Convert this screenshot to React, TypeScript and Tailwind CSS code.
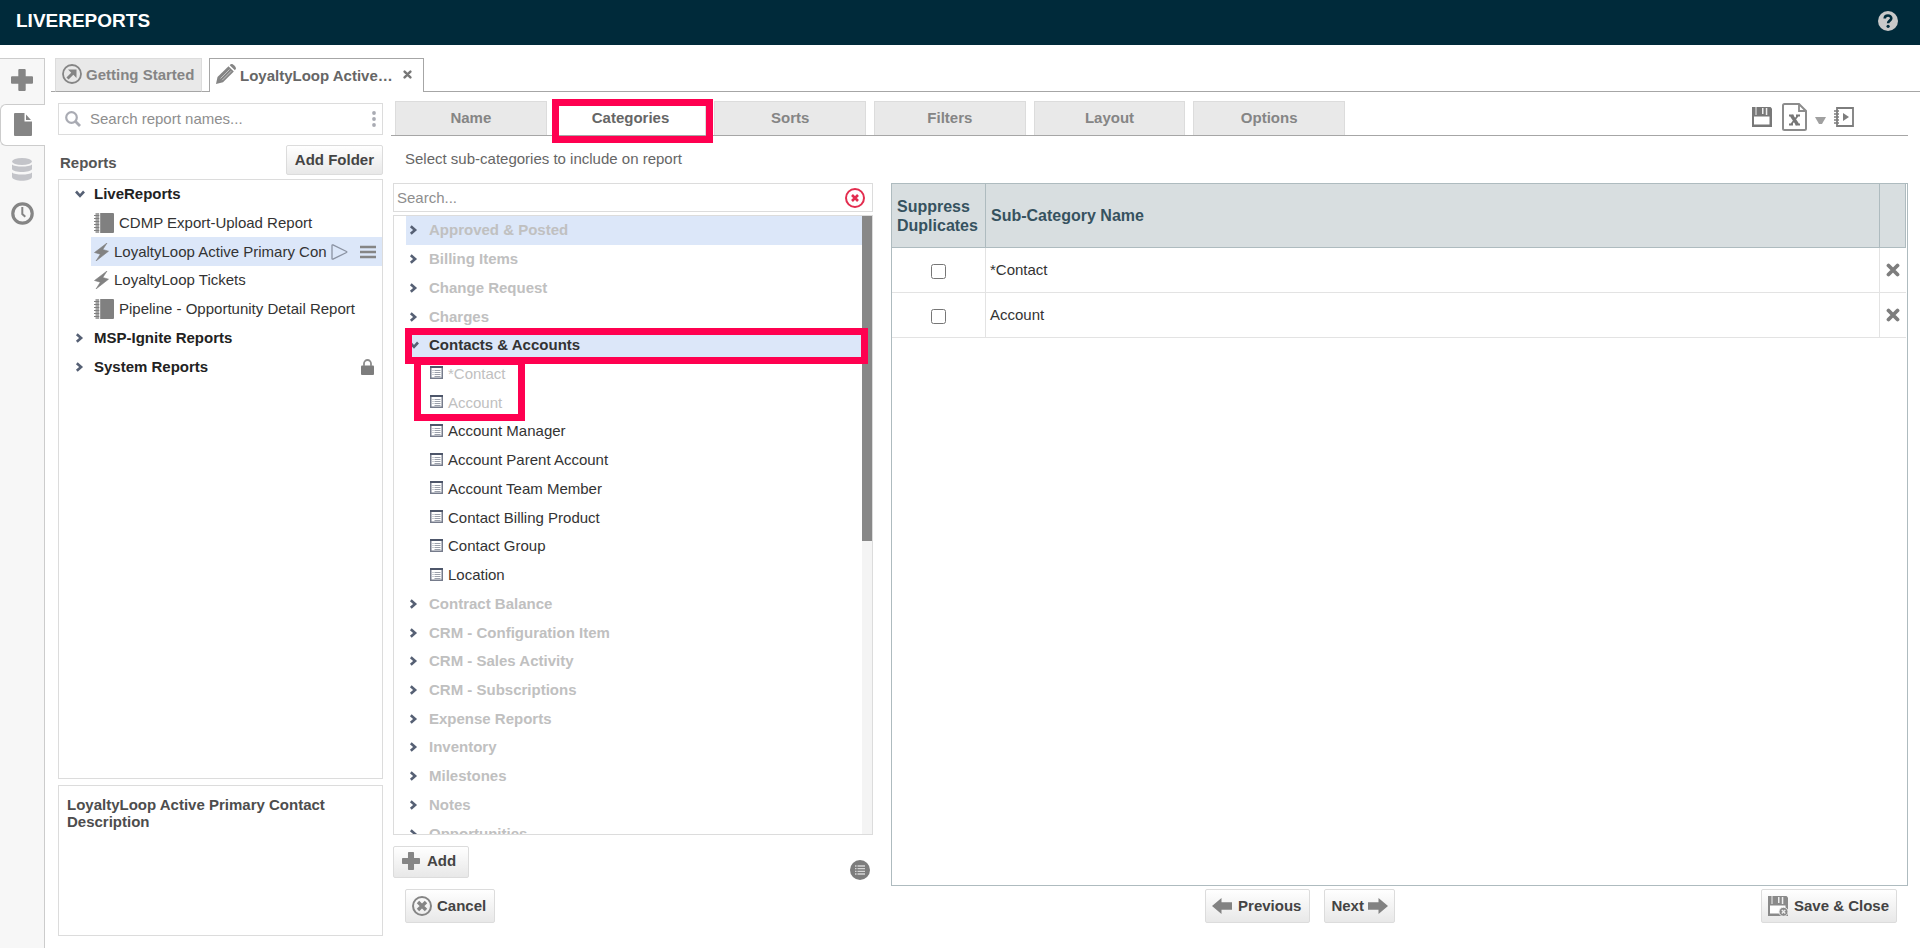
import React, { useState } from 'react';
import clsx from 'clsx';

interface Report {
  name: string;
  kind: 'folder' | 'book' | 'bolt';
  open?: boolean;
  selected?: boolean;
  locked?: boolean;
}

interface Category {
  name: string;
  leaf?: boolean;
  open?: boolean;
  hover?: boolean;
  used?: boolean;
}

const reports: Report[] = [
  { name: 'LiveReports', kind: 'folder', open: true },
  { name: 'CDMP Export-Upload Report', kind: 'book' },
  { name: 'LoyaltyLoop Active Primary Con', kind: 'bolt', selected: true },
  { name: 'LoyaltyLoop Tickets', kind: 'bolt' },
  { name: 'Pipeline - Opportunity Detail Report', kind: 'book' },
  { name: 'MSP-Ignite Reports', kind: 'folder' },
  { name: 'System Reports', kind: 'folder', locked: true },
];

const categories: Category[] = [
  { name: 'Approved & Posted', hover: true },
  { name: 'Billing Items' },
  { name: 'Change Request' },
  { name: 'Charges' },
  { name: 'Contacts & Accounts', open: true },
  { name: '*Contact', leaf: true, used: true },
  { name: 'Account', leaf: true, used: true },
  { name: 'Account Manager', leaf: true },
  { name: 'Account Parent Account', leaf: true },
  { name: 'Account Team Member', leaf: true },
  { name: 'Contact Billing Product', leaf: true },
  { name: 'Contact Group', leaf: true },
  { name: 'Location', leaf: true },
  { name: 'Contract Balance' },
  { name: 'CRM - Configuration Item' },
  { name: 'CRM - Sales Activity' },
  { name: 'CRM - Subscriptions' },
  { name: 'Expense Reports' },
  { name: 'Inventory' },
  { name: 'Milestones' },
  { name: 'Notes' },
  { name: 'Opportunities' },
];

const steps = ['Name', 'Categories', 'Sorts', 'Filters', 'Layout', 'Options'];

const buttonClass =
  'flex items-center rounded-[2px] border border-[#dcdcdc] bg-linear-to-b from-white to-[#e8e8e8] font-bold text-[#444]';

const PlusIcon = ({ className }: { className?: string }) => (
  <svg className={className} viewBox="0 0 22 22" fill="#858585">
    <path d="M8.300 0h5.400a1 1 0 0 1 1 1v6.300H21a1 1 0 0 1 1 1v5.400a1 1 0 0 1-1 1h-6.300V21a1 1 0 0 1-1 1H8.300a1 1 0 0 1-1-1v-6.300H1a1 1 0 0 1-1-1V8.300a1 1 0 0 1 1-1h6.300V1a1 1 0 0 1 1-1z" />
  </svg>
);

const Chevron = ({ open }: { open?: boolean }) => (
  <svg className="h-[10px] w-[10px] shrink-0" viewBox="0 0 10 10" fill="none" stroke="#566074" strokeWidth="2.600">
    {open ? <path d="M1 2.500l4 4.300 4-4.300" /> : <path d="M1.800 1.200l4.300 3.800-4.300 3.800" />}
  </svg>
);

const BookIcon = () => (
  <svg className="h-5 w-5 shrink-0" viewBox="0 0 20 20">
    <path d="M6 0h13a1 1 0 0 1 1 1v18a1 1 0 0 1-1 1H6z" fill="#808080" />
    <path d="M1.500 0H5v20H1.500z" fill="#a3a3a3" />
    <path d="M0 2.500h5.500M0 5.500h5.500M0 8.500h5.500M0 11.500h5.500M0 14.500h5.500M0 17.500h5.500" stroke="#808080" strokeWidth="1.200" />
    <path d="M5.800 0v20" stroke="#e2e2e2" strokeWidth="0.800" />
  </svg>
);

const BoltIcon = () => (
  <svg className="h-[18px] w-[15px] shrink-0" viewBox="0 0 15 18" fill="#828282">
    <path d="M13 0L0.500 9.500l5.800 1.700L2 18 14.500 8.200 8.800 6.500z" stroke="#828282" strokeWidth="0.600" />
  </svg>
);

const CrossIcon = ({ className }: { className?: string }) => (
  <svg className={className} viewBox="0 0 14 14" fill="none" stroke="currentColor" strokeWidth="3.800" strokeLinecap="round">
    <path d="M2.500 2.500l9 9M11.500 2.500l-9 9" />
  </svg>
);

const CircleCross = ({ color, heavy }: { color: string; heavy?: boolean }) => (
  <svg className="h-5 w-5" viewBox="0 0 20 20" fill="none" stroke={color}>
    <circle cx="10" cy="10" r="9" strokeWidth="2" />
    {heavy ? <path d="M6 6l8 8M14 6l-8 8" strokeWidth="3.400" /> : <path d="M7 7l6 6M13 7l-6 6" strokeWidth="2.600" />}
  </svg>
);

const FieldIcon = () => (
  <svg className="mb-0.5 h-[13px] w-[13px] shrink-0" viewBox="0 0 13 13">
    <rect x="0.750" y="0.750" width="11.500" height="11.500" fill="#fff" stroke="#757b8b" strokeWidth="1.500" />
    <path d="M0 1h13" stroke="#4d566a" strokeWidth="2" />
    <path d="M2.500 4.500h1M4.500 4.500h6M2.500 6.500h1M4.500 6.500h6M2.500 8.500h1M4.500 8.500h6M4.500 10.500h6" stroke="#9ba0ab" />
  </svg>
);

const ArrowIcon = ({ right }: { right?: boolean }) => (
  <svg className={clsx('h-4 w-5', right && 'rotate-180')} viewBox="0 0 20 16" fill="#828282">
    <path d="M0 8l9.500-8v4.200H20v7.600H9.500V16z" />
  </svg>
);

const FloppyIcon = ({ closing }: { closing?: boolean }) => (
  <svg className="h-5 w-5" viewBox="0 0 20 20">
    <path d="M0 0h18.500L20 1.500V20H0z" fill={closing ? '#8a8a8a' : '#787878'} />
    <path d="M2 9.500h15.500v8H2z" fill="#fff" />
    <path d="M3.500 0h1v8h-1zM10 1h1.500v6H10zM13.800 1h1.500v7h-1.500z" fill="#eee" />
    {closing && (
      <g>
        <circle cx="15.500" cy="15.800" r="4.500" fill="#8a8a8a" stroke="#f0f0f0" />
        <path d="M13.800 14l3.500 3.500M17.300 14l-3.500 3.500" stroke="#eee" strokeWidth="1.300" />
      </g>
    )}
  </svg>
);

const Sidebar = () => (
  <nav className="flex w-[45px] shrink-0 flex-col border-t border-[#ccc] bg-[#f7f7f7]">
    <button aria-label="New" className="flex h-[45px] items-center justify-center border-r border-[#ccc] pb-1">
      <PlusIcon className="h-[22px] w-[22px]" />
    </button>
    <button
      aria-label="Reports"
      className="flex h-[42px] items-center justify-center rounded-l-md border-y border-l border-[#ccc] bg-white pr-px pb-0.5"
    >
      <svg className="h-[23px] w-[18px]" viewBox="0 0 18 23" fill="#858585">
        <path d="M1 0h9.500v8.500H18V22a1 1 0 0 1-1 1H1a1 1 0 0 1-1-1V1a1 1 0 0 1 1-1z" />
        <path d="M12 1.500L17 7h-5z" />
      </svg>
    </button>
    <div className="flex flex-1 flex-col border-r border-[#ccc]">
      <button aria-label="Data sources" className="flex h-[46px] items-center justify-center">
        <svg className="h-[23px] w-5" viewBox="0 0 20 23" fill="#c3c4c9">
          <ellipse cx="10" cy="3.500" rx="10" ry="3.500" />
          <path d="M0 6.500c3 2.800 17 2.800 20 0v4.500c-1 4-19 4-20 0z" />
          <path d="M0 14.500c3 2.800 17 2.800 20 0V19c-1 5-19 5-20 0z" />
        </svg>
      </button>
      <button aria-label="Schedule" className="flex h-[42px] items-center justify-center">
        <svg className="h-[23px] w-[23px]" viewBox="0 0 23 23" fill="none" stroke="#858585">
          <circle cx="11.500" cy="11.500" r="9.700" strokeWidth="3.200" />
          <path d="M11.300 5v7l3 2.700" strokeWidth="2" />
        </svg>
      </button>
    </div>
  </nav>
);

const DocumentTabs = () => (
  <div className="flex h-[34px]">
    <div className="w-1 border-b border-[#a6a6a6]" />
    <button className="flex w-[147px] items-center border border-b-[#a6a6a6] border-[#dcdcdc] bg-[#e9e9e9] pl-1.5 font-bold text-[#858585]">
      <svg className="mr-1 mb-0.5 h-5 w-5" viewBox="0 0 20 20" fill="none" stroke="#858585">
        <circle cx="10" cy="10" r="9" strokeWidth="1.800" />
        <path d="M5.500 14.500l6-6" strokeWidth="3" />
        <path d="M6 5.500h8.500V14l-2.700-2.700L8.500 8z" fill="#858585" stroke="none" />
      </svg>
      Getting Started
    </button>
    <div className="w-[7px] border-b border-[#a6a6a6]" />
    <div className="flex w-[215px] items-center border-x border-t border-[#a6a6a6] pl-1.5 font-bold text-[#666]">
      <svg className="mr-1 mb-1 h-5 w-5" viewBox="0 0 20 20" fill="#858585">
        <path d="M0 20l1.500-7L12.500 2.200l5.300 5.300L7 18.300z" />
        <path d="M13.700 1.200c1-1.200 2-1.400 3.300-.7.900.5 1.900 1.500 2.500 2.500.7 1.200.4 2.200-.6 3.300z" />
        <path d="M4.500 14.500l9-9M6.200 16.200l9-9" stroke="#c9c9c9" strokeWidth="0.900" />
      </svg>
      LoyaltyLoop Active…
      <button aria-label="Close tab" className="mb-0.5 ml-2.5 text-[#777]">
        <CrossIcon className="h-[9px] w-[9px]" />
      </button>
    </div>
    <div className="flex-1 border-b border-[#a6a6a6]" />
  </div>
);

const ReportRow = ({ report }: { report: Report }) => {
  if (report.kind === 'folder') {
    return (
      <li className="flex items-center pr-2 pl-4 font-bold text-[#222]">
        <Chevron open={report.open} />
        <span className="ml-[9px] flex-1">{report.name}</span>
        {report.locked && (
          <svg className="h-4 w-[13px]" viewBox="0 0 13 16">
            <rect y="6.500" width="13" height="9.500" rx="1" fill="#7d7d7d" />
            <path d="M3 7V4.500a3.500 3.500 0 0 1 7 0V7" fill="none" stroke="#8d8d8d" strokeWidth="1.800" />
          </svg>
        )}
      </li>
    );
  }
  return (
    <li className={clsx('ml-8 flex items-center pr-1.5 pl-[3px] text-[#333]', report.selected && 'bg-[#dce7f9]')}>
      {report.kind === 'book' ? <BookIcon /> : <BoltIcon />}
      <span className="ml-[5px] whitespace-nowrap">{report.name}</span>
      {report.selected && (
        <>
          <button aria-label="Run report" className="ml-1">
            <svg className="h-4 w-[17px]" viewBox="0 0 17 16" fill="none" stroke="#8b93a3" strokeWidth="1.300">
              <path d="M1 1.500v13c0 .6.500.8 1 .6L15.500 8.500c.5-.3.500-.7 0-1L2 .9C1.500.700 1 .900 1 1.500z" />
            </svg>
          </button>
          <button aria-label="Report menu" className="ml-auto">
            <svg className="h-[14px] w-4" viewBox="0 0 16 14" stroke="#858585" strokeWidth="2.600">
              <path d="M0 2h16M0 7h16M0 12h16" />
            </svg>
          </button>
        </>
      )}
    </li>
  );
};

const ReportsPanel = () => (
  <section className="flex w-[325px] shrink-0 flex-col pb-3">
    <div className="flex h-8 items-center border border-[#dcdcdc] px-1.5">
      <svg className="h-4 w-4 shrink-0" viewBox="0 0 16 16" fill="none" stroke="#a9abb3">
        <circle cx="6.500" cy="6.500" r="5.300" strokeWidth="2.200" />
        <path d="M10.300 10.300l4.700 4.700" strokeWidth="2.800" />
      </svg>
      <input
        aria-label="Search report names"
        placeholder="Search report names..."
        className="ml-[9px] min-w-0 flex-1 outline-none placeholder:text-[#8e8e8e]"
      />
      <button aria-label="Search options">
        <svg className="h-4 w-1" viewBox="0 0 4 16" fill="#a9abb3">
          <circle cx="2" cy="2" r="1.900" />
          <circle cx="2" cy="8" r="1.900" />
          <circle cx="2" cy="14" r="1.900" />
        </svg>
      </button>
    </div>
    <div className="mt-2.5 flex h-[34px] items-start justify-between">
      <h2 className="mt-2 ml-0.5 font-bold text-[#555]">Reports</h2>
      <button className={clsx(buttonClass, 'h-[30px] px-2')}>Add Folder</button>
    </div>
    <div className="min-h-0 flex-1 border border-[#dcdcdc]">
      <ul className="grid h-[201px] auto-rows-fr">
        {reports.map((report) => (
          <ReportRow key={report.name} report={report} />
        ))}
      </ul>
    </div>
    <div className="mt-1.5 h-[151px] border border-[#dcdcdc] px-2 py-2.5 leading-[17px] font-bold text-[#4d4d4d]">
      <p>LoyaltyLoop Active Primary Contact</p>
      <p>Description</p>
    </div>
  </section>
);

const StepTabs = () => (
  <div className="flex h-[35px] items-stretch border-b border-[#a6a6a6] pl-1">
    <div className="flex w-[950px] gap-2">
      {steps.map((step) => {
        const active = step === 'Categories';
        return (
          <button
            key={step}
            className={clsx(
              'relative flex-1 border-x border-t border-[#dcdcdc] pb-0.5 font-bold',
              active ? 'bg-white text-[#666]' : 'bg-[#e9e9e9] text-[#858585]'
            )}
          >
            {step}
            {active && (
              <span className="absolute -top-[3px] -right-2 -bottom-2 -left-1 z-10 border-[7px] border-[#ff0050]" />
            )}
          </button>
        );
      })}
    </div>
    <div className="ml-auto flex items-center pr-[54px] pb-0.5">
      <button aria-label="Save">
        <FloppyIcon />
      </button>
      <button aria-label="Export to Excel" className="ml-2.5">
        <svg className="h-7 w-[25px]" viewBox="0 0 25 28" fill="none" stroke="#8c8c8c">
          <path d="M2.500 1H17l7 7v17.500a1.500 1.500 0 0 1-1.500 1.500h-20A1.500 1.500 0 0 1 1 25.500v-23A1.500 1.500 0 0 1 2.500 1z" strokeWidth="2" />
          <path d="M17 1v7h7" strokeWidth="1.800" />
          <path d="M9.500 12.500l6 9" strokeWidth="3.400" stroke="#777" />
          <path d="M16 12.500l-7 9M7 12.500h4.500M14 12.500h4M7 21.500h4M13.500 21.500H18" strokeWidth="1.800" stroke="#777" />
        </svg>
      </button>
      <button aria-label="Export options" className="mt-1.5 ml-2">
        <svg className="h-[7px] w-[11px]" viewBox="0 0 11 7" fill="#a0a0a0">
          <path d="M0 0h11L7 7H4z" />
        </svg>
      </button>
      <button aria-label="Run report" className="ml-2">
        <svg className="h-5 w-5" viewBox="0 0 20 20" fill="none" stroke="#7d7d7d">
          <path d="M3 1h16v18H3z" strokeWidth="1.800" />
          <path d="M0 4h5M0 7h5M0 10h5M0 13h5M0 16h5" strokeWidth="1.300" />
          <path d="M9 6l6 4-6 4z" fill="#7d7d7d" stroke="none" />
        </svg>
      </button>
    </div>
  </div>
);

const CategoryRow = ({ category }: { category: Category }) => (
  <li
    className={clsx(
      'relative flex items-center',
      category.leaf ? 'pl-6' : 'pl-[3px] font-bold',
      category.used || (!category.leaf && !category.open) ? 'text-[#c0c0c0]' : 'text-[#333]',
      (category.hover || category.open) && 'bg-[#dce7f9]'
    )}
  >
    {category.leaf ? <FieldIcon /> : <Chevron open={category.open} />}
    <span className={category.leaf ? 'ml-[5px]' : 'ml-2.5'}>{category.name}</span>
    {category.open && (
      <>
        <span className="absolute -top-[3px] -right-1.5 -bottom-1 -left-px border-[7px] border-[#ff0050]" />
        <span className="absolute top-[27px] left-2 z-10 h-[63px] w-[111px] border-[7px] border-[#ff0050]" />
      </>
    )}
  </li>
);

const CategoryPicker = () => (
  <section className="flex w-[480px] shrink-0 flex-col pb-2">
    <div className="flex h-[29px] items-center border border-[#dcdcdc] pr-[7px] pl-[3px]">
      <input
        aria-label="Search categories"
        placeholder="Search..."
        className="min-w-0 flex-1 outline-none placeholder:text-[#8e8e8e]"
      />
      <button aria-label="Clear search">
        <CircleCross color="#e32d4f" />
      </button>
    </div>
    <div className="mt-[3px] flex min-h-0 flex-1 overflow-hidden border border-[#dcdcdc]">
      <ul className="ml-3 grid h-[632px] flex-1 auto-rows-fr">
        {categories.map((category) => (
          <CategoryRow key={category.name} category={category} />
        ))}
      </ul>
      <div className="w-2.5 bg-[#f4f4f4]">
        <div className="h-[325px] bg-[#888]" />
      </div>
    </div>
    <div className="mt-[11px] flex items-start justify-between">
      <button className={clsx(buttonClass, 'h-8 pr-3 pb-0.5 pl-2')}>
        <PlusIcon className="mr-[7px] h-[18px] w-[18px]" />
        Add
      </button>
      <button aria-label="Show list" className="mt-3.5 mr-[3px] -mb-1">
        <svg className="h-5 w-5" viewBox="0 0 20 20">
          <circle cx="10" cy="10" r="10" fill="#7d7d7d" />
          <path d="M5 6h1.500M7.500 6H15M5 8.700h1.500M7.500 8.700H15M5 11.400h1.500M7.500 11.400H15M5 14h1.500M7.500 14H15" stroke="#d5d5d5" strokeWidth="1.300" />
        </svg>
      </button>
    </div>
  </section>
);

const SelectedTable = () => {
  const [rows, setRows] = useState(['*Contact', 'Account']);

  return (
    <section className="min-w-0 flex-1 border border-[#aebbbf] pr-px">
      <table className="w-full table-fixed border-separate border-spacing-0 text-left">
        <thead>
          <tr className="h-16 bg-[#d8dee0] text-base leading-[19px] text-[#36525f]">
            <th className="w-[94px] border-r border-b border-[#aebbbf] pl-[5px]">Suppress Duplicates</th>
            <th className="border-r border-b border-[#aebbbf] pl-[5px]">Sub-Category Name</th>
            <th className="w-[26px] border-r border-b border-[#aebbbf]" />
          </tr>
        </thead>
        <tbody>
          {rows.map((row) => (
            <tr key={row} className="h-[45px] text-[#333]">
              <td className="border-r border-b border-[#e3e3e3]">
                <input
                  type="checkbox"
                  aria-label={`Suppress duplicates for ${row}`}
                  className="mx-auto mt-0.5 block h-[15px] w-[15px]"
                />
              </td>
              <td className="border-r border-b border-[#e3e3e3] pl-1">{row}</td>
              <td className="border-b border-[#e3e3e3]">
                <button
                  aria-label={`Remove ${row}`}
                  className="mx-auto block text-[#7d7d7d]"
                  onClick={() => setRows(rows.filter((r) => r !== row))}
                >
                  <CrossIcon className="h-[14px] w-[14px]" />
                </button>
              </td>
            </tr>
          ))}
        </tbody>
      </table>
    </section>
  );
};

const Footer = () => (
  <div className="mt-[3px] flex h-[34px] pr-[11px] pl-3.5">
    <button className={clsx(buttonClass, 'pr-2 pl-1.5')}>
      <span className="mr-[5px]">
        <CircleCross color="#858585" heavy />
      </span>
      Cancel
    </button>
    <div className="mr-[366px] ml-auto flex gap-3.5">
      <button className={clsx(buttonClass, 'gap-1.5 pr-2 pl-1.5')}>
        <ArrowIcon />
        Previous
      </button>
      <button className={clsx(buttonClass, 'gap-1 px-1.5')}>
        Next
        <ArrowIcon right />
      </button>
    </div>
    <button className={clsx(buttonClass, 'gap-1.5 pr-[7px] pl-1.5')}>
      <FloppyIcon closing />
      Save &amp; Close
    </button>
  </div>
);

export const App: React.FC = () => {
  return (
    <div className="flex h-screen flex-col overflow-hidden bg-white font-['Liberation_Sans',Arial,sans-serif] text-[15px] leading-5">
      <header className="flex h-[45px] shrink-0 items-center justify-between bg-[#002a3a] pr-[22px] pb-1 pl-4">
        <h1 className="text-[19px] font-bold text-white">LIVEREPORTS</h1>
        <button aria-label="Help">
          <svg className="h-5 w-5" viewBox="0 0 20 20" fill="none">
            <circle cx="10" cy="10" r="10" fill="#c9c9c9" />
            <path d="M6.700 7.500C6.700 3.500 13.300 3.500 13.300 7.300c0 2.500-3.200 2.200-3.200 5" stroke="#002a3a" strokeWidth="2.600" />
            <circle cx="10.100" cy="15.300" r="1.600" fill="#002a3a" />
          </svg>
        </button>
      </header>
      <div className="flex min-h-0 flex-1 pt-[13px]">
        <Sidebar />
        <div className="flex min-w-0 flex-1 flex-col pl-1.5">
          <DocumentTabs />
          <div className="flex min-h-0 flex-1 pt-[9px] pl-[7px]">
            <div className="flex pt-0.5">
              <ReportsPanel />
            </div>
            <main className="ml-2 flex min-w-0 flex-1 flex-col pr-3 pb-[25px]">
              <StepTabs />
              <p className="mt-[13px] ml-3.5 text-[#666]">Select sub-categories to include on report</p>
              <div className="mt-3.5 ml-0.5 flex min-h-0 flex-1 gap-[18px]">
                <CategoryPicker />
                <SelectedTable />
              </div>
              <Footer />
            </main>
          </div>
        </div>
      </div>
    </div>
  );
};

export default App;
